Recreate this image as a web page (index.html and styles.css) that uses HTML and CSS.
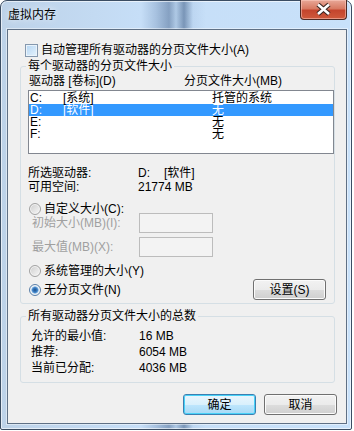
FILE: index.html
```html
<!DOCTYPE html>
<html lang="zh-CN">
<head>
    <meta charset="UTF-8">
    <title>虚拟内存</title>
    <link rel="stylesheet" href="styles.css">
</head>
<body>
    <div class="window">
        <div class="titlebar">
            <span class="title">虚拟内存</span>
            <button class="close-btn" aria-label="关闭">
                <svg width="45" height="19" viewBox="0 0 45 19">
                    <path d="M17 4.5 L28 14 M28 4.5 L17 14" stroke="#3a2622" stroke-width="4.8" fill="none"/>
                    <path d="M17 4.5 L28 14 M28 4.5 L17 14" stroke="#ffffff" stroke-width="2.6" fill="none"/>
                </svg>
            </button>
        </div>

        <div class="client">
            <label class="check-row"><span class="checkbox"></span>自动管理所有驱动器的分页文件大小(A)</label>

            <fieldset class="group group-drives">
                <legend>每个驱动器的分页文件大小</legend>
                <div class="list-head">
                    <span class="col-drive">驱动器 [卷标](D)</span>
                    <span>分页文件大小(MB)</span>
                </div>
                <div class="listbox">
                    <div class="row"><span class="c-letter">C:</span><span class="c-label">[系统]</span><span>托管的系统</span></div>
                    <div class="row selected"><span class="c-letter">D:</span><span class="c-label">[软件]</span><span>无</span></div>
                    <div class="row"><span class="c-letter">E:</span><span class="c-label"></span><span>无</span></div>
                    <div class="row"><span class="c-letter">F:</span><span class="c-label"></span><span>无</span></div>
                </div>

                <div class="info">
                    <div class="info-row"><span class="info-key">所选驱动器:</span><span class="v-drive">D:</span><span>[软件]</span></div>
                    <div class="info-row"><span class="info-key">可用空间:</span><span>21774 MB</span></div>
                </div>

                <div class="radio-row radio-custom"><span class="radio"></span>自定义大小(C):</div>
                <div class="field-row"><span class="field-label">初始大小(MB)(I):</span><span class="textbox"></span></div>
                <div class="field-row"><span class="field-label">最大值(MB)(X):</span><span class="textbox"></span></div>
                <div class="radio-row radio-sys"><span class="radio"></span>系统管理的大小(Y)</div>
                <div class="none-row">
                    <div class="radio-row"><span class="radio checked"></span>无分页文件(N)</div>
                    <button class="btn">设置(S)</button>
                </div>
            </fieldset>

            <fieldset class="group group-total">
                <legend>所有驱动器分页文件大小的总数</legend>
                <div class="total-row"><span class="total-key">允许的最小值:</span><span>16 MB</span></div>
                <div class="total-row"><span class="total-key">推荐:</span><span>6054 MB</span></div>
                <div class="total-row"><span class="total-key">当前已分配:</span><span>4036 MB</span></div>
            </fieldset>

            <div class="actions">
                <button class="btn btn-default">确定</button>
                <button class="btn">取消</button>
            </div>
        </div>
    </div>
</body>
</html>
```

FILE: styles.css
```css
* {
    margin: 0;
    padding: 0;
    box-sizing: border-box;
}

body {
    width: 354px;
    height: 431px;
    overflow: hidden;
    background: #ffffff;
    color: #000;
    font: 12px/14px "Liberation Sans", "Noto Sans CJK SC", sans-serif;
}

/* aero frame */
.window {
    position: relative;
    width: 352px;
    height: 430px;
    display: flex;
    flex-direction: column;
    padding: 0 4px 5px 6px;
    border: 1px solid #3b4d63;
    border-radius: 7px 7px 2px 2px;
    background:
        linear-gradient(to right, rgba(255,255,255,0) 140px, rgba(110,140,180,0.35) 155px, rgba(80,110,150,0.55) 168px, rgba(130,160,195,0.35) 175px, rgba(70,100,140,0.6) 183px, rgba(150,180,215,0.2) 192px, rgba(255,255,255,0) 205px),
        linear-gradient(to right, #bdd2e8, #c6def7 40%, #c8e1fa);
    box-shadow: inset 0 0 0 1px rgba(255,255,255,0.6);
}

.titlebar {
    height: 28px;
    padding: 7px 0 0 1px;
}

.title {
    text-shadow: 0 0 6px rgba(255,255,255,0.9);
}

.close-btn {
    position: absolute;
    top: -1px;
    right: 4px;
    width: 47px;
    height: 20px;
    display: flex;
    align-items: center;
    justify-content: center;
    border: 1px solid #4d2a24;
    border-top: none;
    border-radius: 0 0 4px 4px;
    background: linear-gradient(#e8a898 0%, #d87a63 45%, #c4452d 55%, #cf5a3c 100%);
    box-shadow: inset 0 0 0 1px rgba(255,210,200,0.5);
}

.client {
    flex: 1;
    display: flex;
    flex-direction: column;
    background: #f0f0f0;
    border: 1px solid #5f7085;
    box-shadow: 0 0 0 1px rgba(255,255,255,0.45);
}

/* checkbox */
.check-row {
    display: flex;
    align-items: center;
    gap: 3px;
    height: 14px;
    margin: 13px 0 0 17px;
}

.checkbox {
    width: 13px;
    height: 13px;
    border: 1px solid #8598ae;
    background: linear-gradient(135deg, #b4d5f3, #e6f3fd);
    box-shadow: inset 0 0 0 1px #e9f3fb;
}

/* group boxes */
.group {
    min-width: 0;
    margin: 2px 11px 0 12px;
    padding: 0 0 3px 7px;
    border: 1px solid #d5dfe5;
    border-radius: 3px;
}

.group legend {
    padding: 0 2px;
    margin-left: -2px;
    line-height: 14px;
}

.list-head {
    display: flex;
    padding: 1px 0 0 1px;
}

.col-drive {
    width: 155px;
}

.listbox {
    height: 64px;
    margin-top: 2px;
    padding-top: 1px;
    background: #fff;
    border: 1px solid #828790;
}

.row {
    display: flex;
    height: 12px;
    line-height: 12px;
    padding-left: 1px;
}

.row.selected {
    background: #3399ff;
    color: #fff;
}

.c-letter {
    width: 33px;
}

.c-label {
    width: 149px;
}

.info {
    margin-top: 12px;
}

.info-row {
    display: flex;
}

.info-key {
    width: 110px;
}

.v-drive {
    width: 26px;
}

/* radios */
.radio-row {
    display: flex;
    align-items: center;
    gap: 3px;
    height: 14px;
    margin-left: 1px;
}

.radio {
    width: 12px;
    height: 12px;
    border-radius: 50%;
    border: 1px solid #a2a2a2;
    background: linear-gradient(135deg, #cdcdcd, #f8f8f8);
    box-shadow: inset 0 0 0 1px #f4f4f4;
}

.radio.checked {
    border-color: #5a7fa8;
    background: radial-gradient(circle, #1c4f8c 0, #3f83c8 2.5px, #9fc6ea 3.5px, #e6f0f9 4px, #d8e4ef 100%);
}

.radio-custom {
    margin-top: 8px;
    margin-bottom: -3px;
}

.field-row {
    display: flex;
    align-items: center;
    height: 20px;
    padding-left: 4px;
    color: #a0a0a0;
}

.field-row + .field-row {
    margin-top: 4px;
}

.field-label {
    width: 107px;
}

.textbox {
    width: 74px;
    height: 20px;
    border: 1px solid #bcbcbc;
    background: #f3f3f3;
}

.radio-sys {
    margin-top: 7px;
}

.none-row {
    display: flex;
    align-items: center;
    justify-content: space-between;
    margin-top: 1px;
    padding-right: 8px;
}

/* buttons */
.btn {
    width: 73px;
    height: 21px;
    font: inherit;
    color: #000;
    border: 1px solid #707070;
    border-radius: 3px;
    background: linear-gradient(#f2f2f2 0%, #ebebeb 50%, #dddddd 51%, #cfcfcf 100%);
    box-shadow: inset 0 0 0 1px #fbfbfb;
}

.btn-default {
    border-color: #3c7fb1;
    background: linear-gradient(#eaf6fd 0%, #d9f0fc 50%, #bee6fd 51%, #a7d9f5 100%);
    box-shadow: inset 0 0 0 1px #48d2f8;
}

.group-total {
    margin-top: 5px;
    padding: 5px 0 6px 7px;
}

.total-row {
    display: flex;
    line-height: 16px;
    margin-left: 3px;
}

.total-key {
    width: 108px;
}

.actions {
    display: flex;
    justify-content: flex-end;
    gap: 8px;
    margin: 11px 9px 0 0;
}
```
